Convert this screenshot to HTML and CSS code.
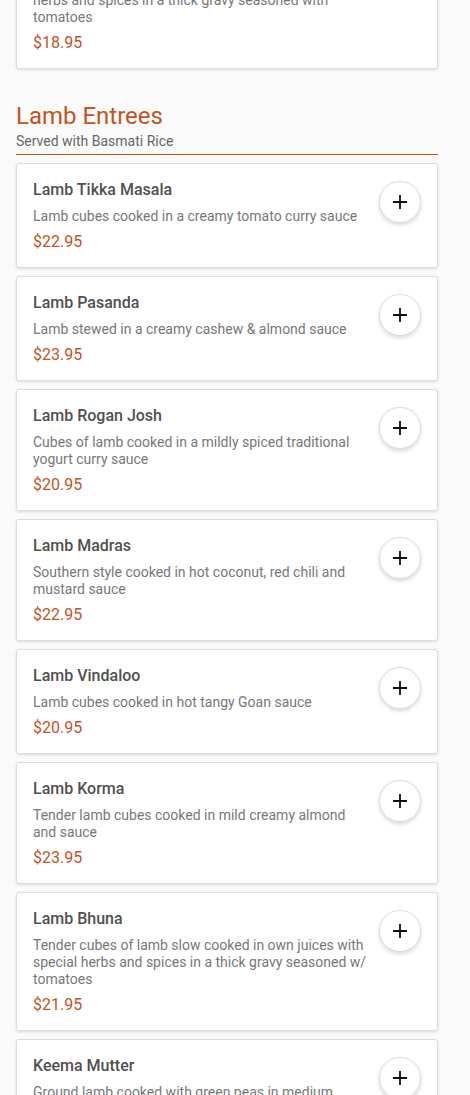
FILE: index.html
```html
<!DOCTYPE html>
<html lang="en">
<head>
    <meta charset="UTF-8">
    <meta name="viewport" content="width=device-width, initial-scale=1.0">
    <title>Menu - Lamb Entrees</title>
    <link rel="stylesheet" href="styles.css">
</head>
<body>
    <main class="menu">
        <div class="item">
            <div class="item-info">
                <h3 class="item-name">Chicken Bhuna</h3>
                <p class="item-desc">Tender chicken cooked in own juices with special herbs and spices in a thick gravy seasoned with tomatoes</p>
                <div class="item-price">$18.95</div>
            </div>
            <button class="add-btn" aria-label="Add"><svg viewBox="0 0 24 24"><path d="M12 5v14M5 12h14"/></svg></button>
        </div>

        <section class="category">
            <div class="category-head">
                <h2>Lamb Entrees</h2>
                <p>Served with Basmati Rice</p>
            </div>

            <div class="item">
                <div class="item-info">
                    <h3 class="item-name">Lamb Tikka Masala</h3>
                    <p class="item-desc">Lamb cubes cooked in a creamy tomato curry sauce</p>
                    <div class="item-price">$22.95</div>
                </div>
                <button class="add-btn" aria-label="Add"><svg viewBox="0 0 24 24"><path d="M12 5v14M5 12h14"/></svg></button>
            </div>
            <div class="item">
                <div class="item-info">
                    <h3 class="item-name">Lamb Pasanda</h3>
                    <p class="item-desc">Lamb stewed in a creamy cashew &amp; almond sauce</p>
                    <div class="item-price">$23.95</div>
                </div>
                <button class="add-btn" aria-label="Add"><svg viewBox="0 0 24 24"><path d="M12 5v14M5 12h14"/></svg></button>
            </div>
            <div class="item">
                <div class="item-info">
                    <h3 class="item-name">Lamb Rogan Josh</h3>
                    <p class="item-desc">Cubes of lamb cooked in a mildly spiced traditional yogurt curry sauce</p>
                    <div class="item-price">$20.95</div>
                </div>
                <button class="add-btn" aria-label="Add"><svg viewBox="0 0 24 24"><path d="M12 5v14M5 12h14"/></svg></button>
            </div>
            <div class="item">
                <div class="item-info">
                    <h3 class="item-name">Lamb Madras</h3>
                    <p class="item-desc">Southern style cooked in hot coconut, red chili and mustard sauce</p>
                    <div class="item-price">$22.95</div>
                </div>
                <button class="add-btn" aria-label="Add"><svg viewBox="0 0 24 24"><path d="M12 5v14M5 12h14"/></svg></button>
            </div>
            <div class="item">
                <div class="item-info">
                    <h3 class="item-name">Lamb Vindaloo</h3>
                    <p class="item-desc">Lamb cubes cooked in hot tangy Goan sauce</p>
                    <div class="item-price">$20.95</div>
                </div>
                <button class="add-btn" aria-label="Add"><svg viewBox="0 0 24 24"><path d="M12 5v14M5 12h14"/></svg></button>
            </div>
            <div class="item">
                <div class="item-info">
                    <h3 class="item-name">Lamb Korma</h3>
                    <p class="item-desc">Tender lamb cubes cooked in mild creamy almond and sauce</p>
                    <div class="item-price">$23.95</div>
                </div>
                <button class="add-btn" aria-label="Add"><svg viewBox="0 0 24 24"><path d="M12 5v14M5 12h14"/></svg></button>
            </div>
            <div class="item">
                <div class="item-info">
                    <h3 class="item-name">Lamb Bhuna</h3>
                    <p class="item-desc">Tender cubes of lamb slow cooked in own juices with special herbs and spices in a thick gravy seasoned w/ tomatoes</p>
                    <div class="item-price">$21.95</div>
                </div>
                <button class="add-btn" aria-label="Add"><svg viewBox="0 0 24 24"><path d="M12 5v14M5 12h14"/></svg></button>
            </div>
            <div class="item">
                <div class="item-info">
                    <h3 class="item-name">Keema Mutter</h3>
                    <p class="item-desc">Ground lamb cooked with green peas in medium spiced curry sauce</p>
                    <div class="item-price">$19.95</div>
                </div>
                <button class="add-btn" aria-label="Add"><svg viewBox="0 0 24 24"><path d="M12 5v14M5 12h14"/></svg></button>
            </div>
        </section>
    </main>
</body>
</html>
```

FILE: styles.css
```css
* {
    margin: 0;
    padding: 0;
    box-sizing: border-box;
    font-family: Roboto, 'Liberation Sans', sans-serif;
}
body {
    background: #fafafa;
    color: #444;
    overflow: hidden;
}
.menu {
    /* page is scrolled partway into the list */
    margin-top: -70px;
    padding: 0 32px 40px 16px;
}
.item {
    display: flex;
    align-items: flex-start;
    gap: 10px;
    background: #fff;
    border: 1px solid #dcdcdc;
    border-radius: 3px;
    box-shadow: 0 1px 3px rgba(0, 0, 0, 0.12);
    padding: 16px 16px 15px 16px;
    margin-bottom: 8px;
}
.item-info {
    flex: 1;
    display: flex;
    flex-direction: column;
    gap: 7px;
}
.item-name {
    font-size: 16px;
    font-weight: 500;
    line-height: 20px;
    color: #505050;
}
.item-desc {
    font-size: 14px;
    line-height: 17px;
    color: #777;
    margin-top: 1px;
}
.item-price {
    font-size: 16px;
    line-height: 20px;
    color: #c4531f;
}
.add-btn {
    flex: none;
    width: 42px;
    height: 42px;
    margin-top: 1px;
    border-radius: 50%;
    border: 1px solid #ddd;
    background: #fff;
    box-shadow: 0 2px 4px rgba(0, 0, 0, 0.16);
    display: flex;
    align-items: center;
    justify-content: center;
    cursor: pointer;
}
.add-btn svg {
    width: 24px;
    height: 24px;
    fill: none;
    stroke: #111;
    stroke-width: 1.8;
}
.category {
    margin-top: 33px;
}
.category-head {
    border-bottom: 1px solid #c4531f;
    padding-bottom: 4px;
    margin-bottom: 8px;
}
.category-head h2 {
    font-size: 24px;
    font-weight: 400;
    line-height: 28px;
    color: #c4531f;
    margin-bottom: 3px;
}
.category-head p {
    font-size: 14px;
    line-height: 17px;
    color: #666;
}
```
